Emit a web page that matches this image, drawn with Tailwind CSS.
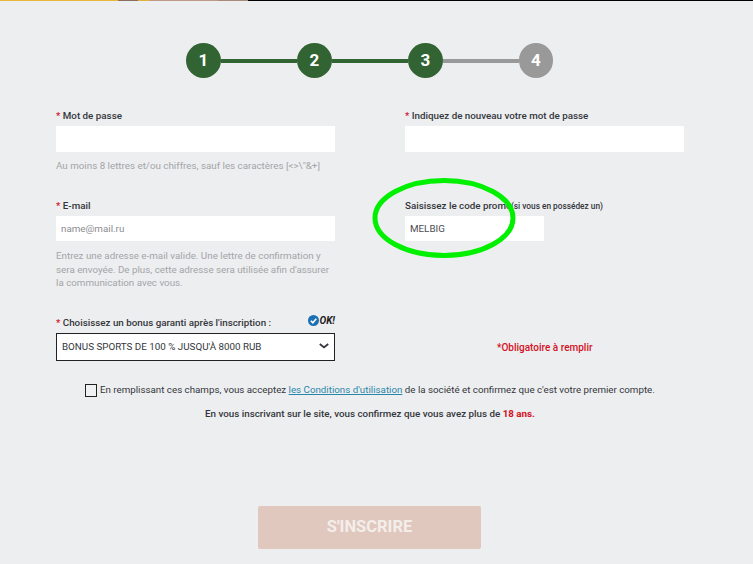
<!DOCTYPE html>
<html lang="fr">
<head>
    <meta charset="UTF-8">
    <title>Inscription</title>
    <script src="https://cdn.jsdelivr.net/npm/@tailwindcss/browser@4"></script>
</head>
<body class="bg-[#edeef0] font-['Roboto',sans-serif] text-[#33363b]">
    <div class="relative w-[753px] h-[564px] overflow-hidden">
        <!-- Top strip -->
        <div class="flex h-px bg-black">
            <div class="w-[118px] bg-[#e8b83c]"></div>
            <div class="w-[20px] bg-[#8a6f60]"></div>
            <div class="w-[12px] bg-[#e0b040]"></div>
            <div class="w-[68px] bg-[#c09a88]"></div>
            <div class="w-[30px] bg-[#a88a78]"></div>
        </div>

        <!-- Steps -->
        <div class="flex items-center ml-[186px] mt-[42px]">
            <div class="w-[35px] h-[35px] shrink-0 rounded-full bg-[#326433] text-white text-[17px] font-bold flex items-center justify-center">1</div>
            <div class="w-[76px] h-[4px] bg-[#326433]"></div>
            <div class="w-[35px] h-[35px] shrink-0 rounded-full bg-[#326433] text-white text-[17px] font-bold flex items-center justify-center">2</div>
            <div class="w-[76px] h-[4px] bg-[#326433]"></div>
            <div class="w-[35px] h-[35px] shrink-0 rounded-full bg-[#326433] text-white text-[17px] font-bold flex items-center justify-center">3</div>
            <div class="w-[76px] h-[4px] bg-[#999999]"></div>
            <div class="w-[34px] h-[35px] shrink-0 rounded-full bg-[#999999] text-white text-[17px] font-bold flex items-center justify-center">4</div>
        </div>

        <!-- Form -->
        <div class="grid grid-cols-[279px_279px] gap-x-[70px] ml-[56px] mt-[32px]">
            <div class="h-[89px]">
                <label class="block text-[9.8px] font-medium leading-[12px] mb-[4px]"><span class="text-[#d0202e]">*</span> Mot de passe</label>
                <div class="h-[26px] bg-white"></div>
                <p class="mt-[7px] text-[9.8px] leading-[14px] text-[#a3a5a8]">Au moins 8 lettres et/ou chiffres, sauf les caractères [&lt;&gt;\"&amp;+]</p>
            </div>
            <div class="h-[89px]">
                <label class="block text-[9.8px] font-medium leading-[12px] mb-[4px]"><span class="text-[#d0202e]">*</span> Indiquez de nouveau votre mot de passe</label>
                <div class="h-[26px] bg-white"></div>
            </div>
            <div class="h-[115px]">
                <label class="block text-[9.8px] font-medium leading-[14px] mb-[3px]"><span class="text-[#d0202e]">*</span> E-mail</label>
                <div class="h-[25px] bg-white flex items-center px-[5px] pt-px text-[9.8px] text-[#8b8d90]">name@mail.ru</div>
                <p class="mt-[8px] text-[9.8px] leading-[13.5px] text-[#a3a5a8]">Entrez une adresse e-mail valide. Une lettre de confirmation y sera envoyée. De plus, cette adresse sera utilisée afin d'assurer la communication avec vous.</p>
            </div>
            <div class="h-[115px]">
                <label class="block text-[9.8px] font-medium leading-[14px] mb-[3px]">Saisissez le code promo <span class="text-[8.3px] -ml-[3px]">(si vous en possédez un)</span></label>
                <div class="w-[139px] h-[25px] bg-white flex items-center px-[5px] pt-px text-[9.8px] text-[#4a4c50]">MELBIG</div>
            </div>
            <div>
                <div class="flex justify-between items-start h-[19px]">
                    <label class="text-[9.8px] font-medium leading-[14px] mt-[2px]"><span class="text-[#d0202e]">*</span> Choisissez un bonus garanti après l'inscription :</label>
                    <span class="flex items-center gap-px text-[10px] font-bold italic text-[#222] -mt-px">
                        <svg class="w-[11px] h-[11px]" viewBox="0 0 10 10"><circle cx="5" cy="5" r="5" fill="#1a6fb5"/><path d="M2.6 5.2 4.4 7 7.5 3.4" fill="none" stroke="#fff" stroke-width="1.5"/></svg>
                        OK!
                    </span>
                </div>
                <div class="h-[28px] bg-white border border-[#222] flex items-center justify-between pl-[5px] pr-[5px] text-[9.8px] text-[#33363b]">
                    <span>BONUS SPORTS DE 100 % JUSQU'À 8000 RUB</span>
                    <svg class="w-[10px] h-[6px] mb-[2px]" viewBox="0 0 10 6"><path d="M.8 1 5 4.4 9.2 1" fill="none" stroke="#33363b" stroke-width="1.8"/></svg>
                </div>
            </div>
            <div class="pt-[20px] pl-[92px]">
                <span class="text-[10px] font-medium text-[#d3121f]">*Obligatoire à remplir</span>
            </div>
        </div>

        <!-- Terms -->
        <div class="flex items-center ml-[85px] mt-[22px] text-[9.75px]">
            <span class="w-[12px] h-[13px] border border-[#222] bg-white/20 shrink-0"></span>
            <span class="ml-[3px]">En remplissant ces champs, vous acceptez <a href="#" class="text-[#2a86a8] underline">les Conditions d'utilisation</a> de la société et confirmez que c'est votre premier compte.</span>
        </div>
        <p class="mt-[9px] ml-[205px] text-[9.8px] font-medium leading-[14px]">En vous inscrivant sur le site, vous confirmez que vous avez plus de <span class="font-bold text-[#d3121f]">18 ans.</span></p>

        <!-- Submit -->
        <button class="block ml-[258px] mt-[85px] pt-px w-[223px] h-[43px] rounded-[2px] bg-[#e0c8bf] text-[#f4eeeb] text-[16.5px] font-bold">S'INSCRIRE</button>

        <!-- Green hand drawn ellipse over the promo field -->
        <svg class="absolute left-[372px] top-[177px] w-[144px] h-[82px] pointer-events-none" viewBox="0 0 144 82">
            <ellipse cx="72" cy="41" rx="69" ry="37.5" fill="none" stroke="#00f000" stroke-width="5"/>
        </svg>
    </div>
</body>
</html>
